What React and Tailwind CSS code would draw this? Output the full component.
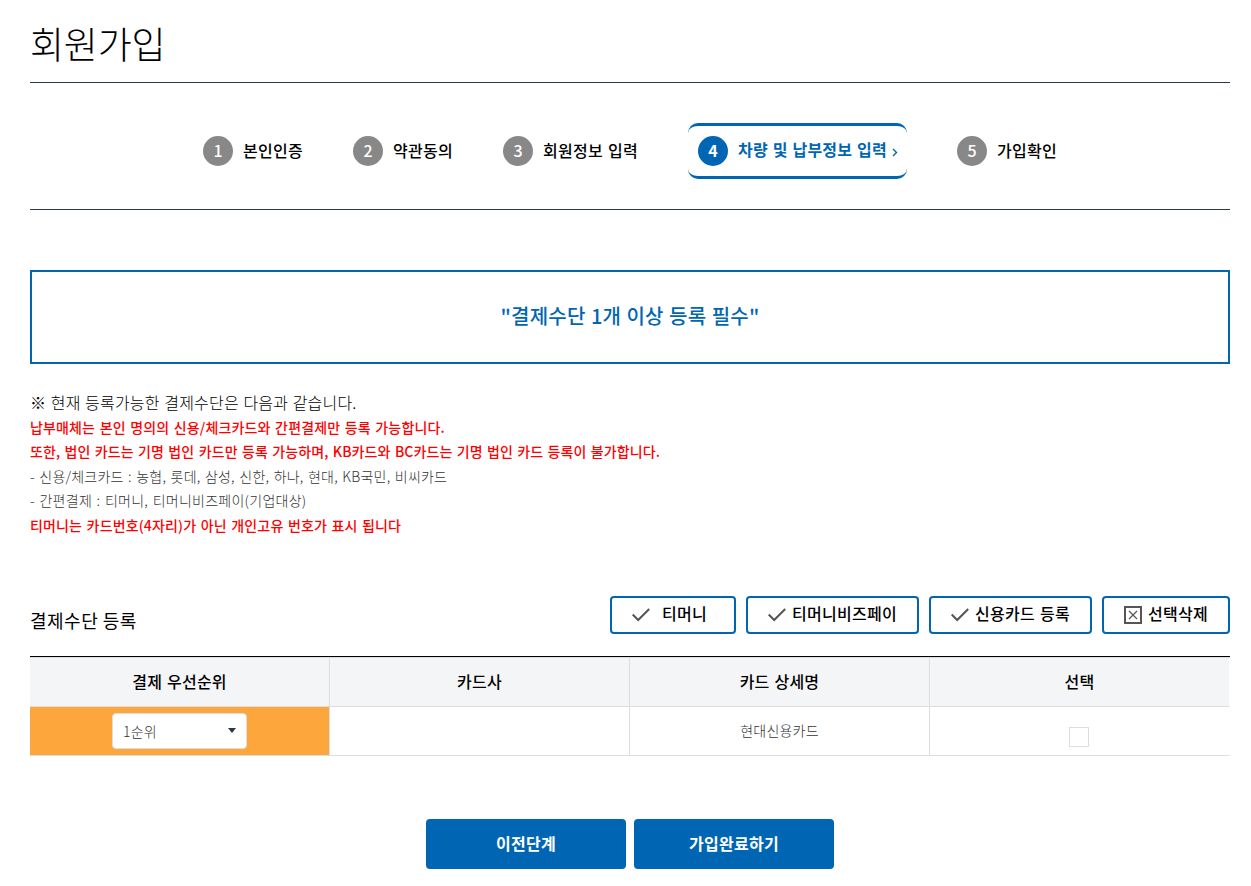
import { useState } from "react";

const steps = [
  { no: 1, label: "본인인증" },
  { no: 2, label: "약관동의" },
  { no: 3, label: "회원정보 입력" },
  { no: 4, label: "차량 및 납부정보 입력", active: true },
  { no: 5, label: "가입확인" },
];

const columns = ["결제 우선순위", "카드사", "카드 상세명", "선택"];

const CheckIcon = () => (
  <svg width="18" height="16" viewBox="0 0 18 16" fill="none" className="mb-px shrink-0">
    <path d="M0.7 7.5L6.2 13L17.2 2" stroke="#555" strokeWidth="2" />
  </svg>
);

const DeleteIcon = () => (
  <svg width="18" height="18" viewBox="0 0 18 18" fill="none" className="shrink-0">
    <rect x="1" y="1" width="16" height="16" stroke="#555" strokeWidth="2" />
    <path d="M5 5L13 13M13 5L5 13" stroke="#555" strokeWidth="1.2" />
  </svg>
);

function Step({ no, label, active }) {
  if (active) {
    return (
      <li className="flex h-14 w-[219px] items-center rounded-[10px] border-y-3 border-[#0066b3] pl-2.5 text-[#0066b3]">
        <span className="flex size-[30px] shrink-0 items-center justify-center rounded-full bg-[#0066b3] pb-0.5 font-bold text-white">{no}</span>
        <span className="ml-2.5 w-[149px] shrink-0 pb-1 font-bold tracking-[0.22px] whitespace-nowrap [word-spacing:1px]">{label}</span>
        <svg width="6" height="9" viewBox="0 0 6 9" fill="none" className="mt-[3px] ml-[5px]">
          <path d="M1 1L4.5 4.5L1 8" stroke="#0066b3" strokeWidth="1.4" />
        </svg>
      </li>
    );
  }

  return (
    <li className="flex items-center gap-2.5">
      <span className="flex size-[30px] items-center justify-center rounded-full bg-[#888] pb-0.5 font-medium text-white">{no}</span>
      <span className="pb-[3px] font-medium tracking-[0.28px] whitespace-nowrap [word-spacing:1px]">{label}</span>
    </li>
  );
}

function ActionButton({ className, icon, children }) {
  return (
    <button type="button" className={`flex h-[38px] items-center rounded-[4px] border-2 border-[#0066b3] bg-white pl-5 font-medium tracking-[0.28px] whitespace-nowrap [word-spacing:1px] ${className}`}>
      {icon}
      <span className="pb-1">{children}</span>
    </button>
  );
}

export default function App() {
  const [checked, setChecked] = useState(false);

  return (
    <main className="h-[886px] w-[1251px] overflow-hidden bg-white pl-[30px] font-['Noto_Sans_CJK_KR',sans-serif] text-base text-black">
      <div className="w-[1200px]">

        {/* title */}
        <h1 className="h-[82px] pt-4 text-[37px] leading-[54px] font-light tracking-[-0.2px]">회원가입</h1>

        {/* steps */}
        <ol className="flex h-32 items-center justify-center gap-[50px] border-y border-[#2c3847] pt-2.5">
          {steps.map((step) => (
            <Step key={step.no} {...step} />
          ))}
        </ol>

        {/* notice */}
        <div className="mt-[60px] flex h-[94px] items-center justify-center border-2 border-[#0066b3] pb-0.5">
          <p className="text-xl font-medium tracking-[0.2px] text-[#0066b3] [word-spacing:0.7px]">"결제수단 1개 이상 등록 필수"</p>
        </div>

        <div className="mt-[26px] h-[149px] text-sm leading-[24.5px] font-light tracking-[0.2px] text-[#333] [word-spacing:1.2px]">
          <p className="text-base leading-[24.5px] text-black [word-spacing:0.8px]">※ 현재 등록가능한 결제수단은 다음과 같습니다.</p>
          <p className="font-medium tracking-[0.15px] text-[#f00]">납부매체는 본인 명의의 신용/체크카드와 간편결제만 등록 가능합니다.</p>
          <p className="font-medium tracking-[0.12px] text-[#f00] [word-spacing:1px]">또한, 법인 카드는 기명 법인 카드만 등록 가능하며, KB카드와 BC카드는 기명 법인 카드 등록이 불가합니다.</p>
          <p>- 신용/체크카드 : 농협, 롯데, 삼성, 신한, 하나, 현대, KB국민, 비씨카드</p>
          <p className="tracking-[0.26px]">- 간편결제 : 티머니, 티머니비즈페이(기업대상)</p>
          <p className="font-medium tracking-[0.15px] text-[#f00]">티머니는 카드번호(4자리)가 아닌 개인고유 번호가 표시 됩니다</p>
        </div>

        {/* payment methods */}
        <div className="mt-[57px] flex h-[38px] items-center justify-between">
          <h2 className="pt-2.5 text-lg tracking-[0.5px]">결제수단 등록</h2>
          <div className="flex gap-2.5">
            <ActionButton className="w-[126px] gap-3" icon={<CheckIcon />}>티머니</ActionButton>
            <ActionButton className="w-[173px] gap-1.5" icon={<CheckIcon />}>티머니비즈페이</ActionButton>
            <ActionButton className="w-[163px] gap-1.5" icon={<CheckIcon />}>신용카드 등록</ActionButton>
            <ActionButton className="w-32 gap-1.5" icon={<DeleteIcon />}>선택삭제</ActionButton>
          </div>
        </div>

        <div className="mt-[22px] border-t border-black">
          <table className="w-[1200px] table-fixed border-separate border-spacing-0 text-center">
            <thead>
              <tr>
                {columns.map((col) => (
                  <th key={col} className="h-[50px] border-y border-r border-[#ddd] bg-[#f4f5f7] bg-clip-padding p-0 pb-[3px] font-medium tracking-[0.25px] [word-spacing:1px] last:border-r-white">{col}</th>
                ))}
              </tr>
            </thead>
            <tbody>
              <tr className="text-sm font-light tracking-[0.2px] text-[#333]">
                <td className="h-[49px] border-r border-b border-[#ddd] bg-[#fda63c] bg-clip-padding p-0">
                  <button type="button" className="mx-auto flex h-9 w-[135px] items-center justify-between rounded-[4px] border border-[#ddd] bg-white px-2.5">
                    <span>1순위</span>
                    <svg width="8" height="5" viewBox="0 0 8 5" className="mb-0.5">
                      <path d="M0 0H8L4 5Z" fill="#2c3847" />
                    </svg>
                  </button>
                </td>
                <td className="border-r border-b border-[#ddd] p-0" />
                <td className="border-r border-b border-[#ddd] p-0 pb-0.5">현대신용카드</td>
                <td className="border-r border-b border-[#ddd] border-r-white p-0 pr-px">
                  <input
                    type="checkbox"
                    checked={checked}
                    onChange={() => setChecked(!checked)}
                    className="mx-auto mt-3 block size-5 appearance-none border border-[#ddd] bg-white checked:bg-[#0066b3]"
                  />
                </td>
              </tr>
            </tbody>
          </table>
        </div>

        {/* bottom buttons */}
        <div className="mt-[63px] flex justify-center gap-2 font-bold tracking-[0.28px] text-white">
          <button type="button" className="h-[50px] w-[200px] rounded-[4px] bg-[#0066b3] pb-[3px]">이전단계</button>
          <button type="button" className="h-[50px] w-[200px] rounded-[4px] bg-[#0066b3] pb-[3px]">가입완료하기</button>
        </div>
      </div>
    </main>
  );
}
